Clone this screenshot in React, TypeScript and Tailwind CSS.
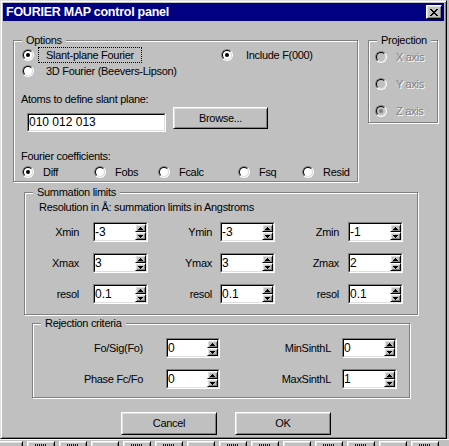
import clsx from "clsx";
import type { ReactNode } from "react";

const raised =
  "border border-t-white border-l-white border-b-black border-r-black shadow-[inset_1px_1px_0_#dfdfdf,inset_-1px_-1px_0_#808080]";
const dim = "text-[#808080] [text-shadow:1px_1px_0_#fff]";

function Radio({ checked = false, disabled = false }: { checked?: boolean; disabled?: boolean }) {
  return (
    <span className="flex h-[12px] w-[12px] shrink-0 rounded-full border border-t-[#808080] border-l-[#808080] border-b-white border-r-white">
      <span
        className={clsx(
          "flex flex-1 items-center justify-center rounded-full border border-t-black border-l-black border-b-[#dfdfdf] border-r-[#dfdfdf]",
          disabled ? "bg-[#c0c0c0]" : "bg-white"
        )}
      >
        {checked && <span className={clsx("h-[4px] w-[4px] rounded-full", disabled ? "bg-[#808080]" : "bg-black")} />}
      </span>
    </span>
  );
}

function Group({ label, className, children }: { label: string; className?: string; children: ReactNode }) {
  return (
    <div className={clsx("relative shrink-0 border border-[#808080] shadow-[inset_1px_1px_0_#fff,1px_1px_0_#fff]", className)}>
      <span className="absolute left-[8px] top-[-7px] bg-[#c0c0c0] px-[4px] leading-[13px]">{label}</span>
      {children}
    </div>
  );
}

function Arrow({ up }: { up?: boolean }) {
  return (
    <svg width="5" height="3" viewBox="0 0 5 3" className={clsx(!up && "rotate-180")}>
      <rect x="2" y="0" width="1" height="1" fill="#000" />
      <rect x="1" y="1" width="3" height="1" fill="#000" />
      <rect x="0" y="2" width="5" height="1" fill="#000" />
    </svg>
  );
}

function Spin({ value, className }: { value: string; className?: string }) {
  return (
    <div className={clsx("flex h-[20px] shrink-0 border border-t-[#808080] border-l-[#808080] border-b-white border-r-white", className)}>
      <div className="flex flex-1 border border-t-black border-l-black border-b-[#dfdfdf] border-r-[#dfdfdf] bg-white">
        <span className="flex-1 text-[12px] leading-[16px] tracking-normal">{value}</span>
        <div className="flex w-[11px] flex-col">
          <span className={clsx("flex h-[8px] items-center justify-center bg-[#c0c0c0]", raised)}>
            <Arrow up />
          </span>
          <span className={clsx("flex h-[8px] items-center justify-center bg-[#c0c0c0]", raised)}>
            <Arrow />
          </span>
        </div>
      </div>
    </div>
  );
}

function Button({ children, className }: { children: ReactNode; className?: string }) {
  return (
    <div className={clsx("flex shrink-0 items-center justify-center bg-[#c0c0c0]", raised, className)}>{children}</div>
  );
}

const limits = [
  ["Xmin", "-3", "Ymin", "-3", "Zmin", "-1"],
  ["Xmax", "3", "Ymax", "3", "Zmax", "2"],
  ["resol", "0.1", "resol", "0.1", "resol", "0.1"],
];

const coeffs = [
  { label: "Diff", w: "w-[72px]", checked: true },
  { label: "Fobs", w: "w-[64px]" },
  { label: "Fcalc", w: "w-[80px]" },
  { label: "Fsq", w: "w-[64px]" },
  { label: "Resid", w: "" },
];

const taskButtons = [0, 1, 2, 3, 4, 5, 6, 7, 8, 9, 10, 11, 12, 13];

export default function App() {
  return (
    <div className="h-[446px] w-[449px] overflow-hidden bg-[#c0c0c0] font-['Liberation_Sans',Arial,sans-serif] text-[11px] tracking-[-0.3px] text-black">
      <div className="h-[439px] w-[447px] border border-t-[#dfdfdf] border-l-[#dfdfdf] border-b-black border-r-black p-[2px] shadow-[inset_1px_1px_0_#fff,inset_-1px_-1px_0_#808080]">
        {/* title bar */}
        <div className="flex h-[18px] items-center justify-between bg-[#000080] pl-[3px] pr-[2px]">
          <span className="text-[12.5px] font-bold tracking-[-0.25px] text-white">FOURIER MAP control panel</span>
          <Button className="h-[14px] w-[16px]">
            <svg width="8" height="7" viewBox="0 0 8 7">
              <path d="M0 0h2v1h1v1h2V1h1V0h2v1H7v1H6v1H5v1h1v1h1v1h1v1H6V6H5V5H3v1H2v1H0V6h1V5h1V4h1V3H2V2H1V1H0z" fill="#000" />
            </svg>
          </Button>
        </div>

        {/* options + projection */}
        <div className="mt-[19px] flex items-start pl-[10px]">
          <Group label="Options" className="h-[142px] w-[345px]">
            <div className="ml-[8px] mt-[6px] flex h-[16px] items-center">
              <div className="flex w-[199px] items-center">
                <Radio checked />
                <span className="ml-[4px] border border-dotted border-black px-[7px] leading-[14px]">Slant-plane Fourier</span>
              </div>
              <Radio checked />
              <span className="ml-[13px]">Include F(000)</span>
            </div>
            <div className="ml-[8px] flex h-[16px] items-center">
              <Radio />
              <span className="ml-[12px]">3D Fourier (Beevers-Lipson)</span>
            </div>
            <div className="ml-[7px] mt-[14px] leading-[13px]">Atoms to define slant plane:</div>
            <div className="mt-[1px] flex items-start">
              <div className="ml-[13px] mt-[6px] h-[19px] w-[139px] border border-t-[#808080] border-l-[#808080] border-b-white border-r-white">
                <div className="h-full border border-t-black border-l-black border-b-[#dfdfdf] border-r-[#dfdfdf] bg-white text-[12px] leading-[15px] tracking-normal">
                  010 012 013
                </div>
              </div>
              <Button className="ml-[7px] h-[22px] w-[95px]">Browse...</Button>
            </div>
            <div className="ml-[7px] mt-[18px] leading-[13px]">Fourier coefficients:</div>
            <div className="ml-[8px] mt-[1px] flex h-[16px] items-center">
              {coeffs.map((c) => (
                <div key={c.label} className={clsx("flex items-center", c.w)}>
                  <Radio checked={c.checked} />
                  <span className="ml-[9px]">{c.label}</span>
                </div>
              ))}
            </div>
          </Group>

          <Group label="Projection" className="ml-[10px] h-[83px] w-[70px]">
            <div className="ml-[6px] mt-[8px] flex flex-col gap-[11px]">
              {["X axis", "Y axis", "Z axis"].map((a) => (
                <div key={a} className="flex h-[16px] items-center">
                  <Radio disabled checked={a === "Z axis"} />
                  <span className={clsx("ml-[9px]", dim)}>{a}</span>
                </div>
              ))}
            </div>
          </Group>
        </div>

        {/* summation limits */}
        <Group label="Summation limits" className="ml-[21px] mt-[10px] h-[123px] w-[394px]">
          <div className="ml-[14px] mt-[8px] leading-[13px]">Resolution in Å: summation limits in Angstroms</div>
          <div className="mt-[8px] flex flex-col gap-[11px]">
            {limits.map((r, i) => (
              <div key={i} className="flex h-[20px] items-center">
                <span className="w-[54px] text-right">{r[0]}</span>
                <Spin value={r[1]} className="ml-[14px] w-[55px]" />
                <span className="w-[64px] text-right">{r[2]}</span>
                <Spin value={r[3]} className="ml-[8px] w-[55px]" />
                <span className="w-[64px] text-right">{r[4]}</span>
                <Spin value={r[5]} className="ml-[9px] w-[55px]" />
              </div>
            ))}
          </div>
        </Group>

        {/* rejection criteria */}
        <Group label="Rejection criteria" className="ml-[29px] mt-[8px] h-[75px] w-[378px]">
          <div className="mt-[14px] flex flex-col gap-[11px]">
            <div className="flex h-[20px] items-center">
              <span className="w-[110px] text-right">Fo/Sig(Fo)</span>
              <Spin value="0" className="ml-[23px] w-[54px]" />
              <span className="w-[111px] text-right">MinSinthL</span>
              <Spin value="0" className="ml-[11px] w-[55px]" />
            </div>
            <div className="flex h-[20px] items-center">
              <span className="w-[110px] text-right">Phase Fc/Fo</span>
              <Spin value="0" className="ml-[23px] w-[54px]" />
              <span className="w-[111px] text-right">MaxSinthL</span>
              <Spin value="1" className="ml-[11px] w-[55px]" />
            </div>
          </div>
        </Group>

        {/* buttons */}
        <div className="mt-[14px] flex pl-[118px]">
          <Button className="h-[23px] w-[96px]">Cancel</Button>
          <Button className="ml-[18px] h-[23px] w-[96px]">OK</Button>
        </div>
      </div>

      {/* taskbar strip */}
      <div className="flex h-[7px] gap-[4px] overflow-hidden border-t border-white pl-0 pt-[1px]">
        {taskButtons.map((i) => (
          <div key={i} className={clsx("flex h-[10px] w-[28px] shrink-0 justify-center pt-[2px]", raised, i === 0 && "-ml-[5px]")}>
            {i % 3 !== 0 && <span className="h-[2px] w-[12px] bg-[repeating-linear-gradient(90deg,#0000c0_0_1px,transparent_1px_2px)]" />}
          </div>
        ))}
      </div>
    </div>
  );
}
